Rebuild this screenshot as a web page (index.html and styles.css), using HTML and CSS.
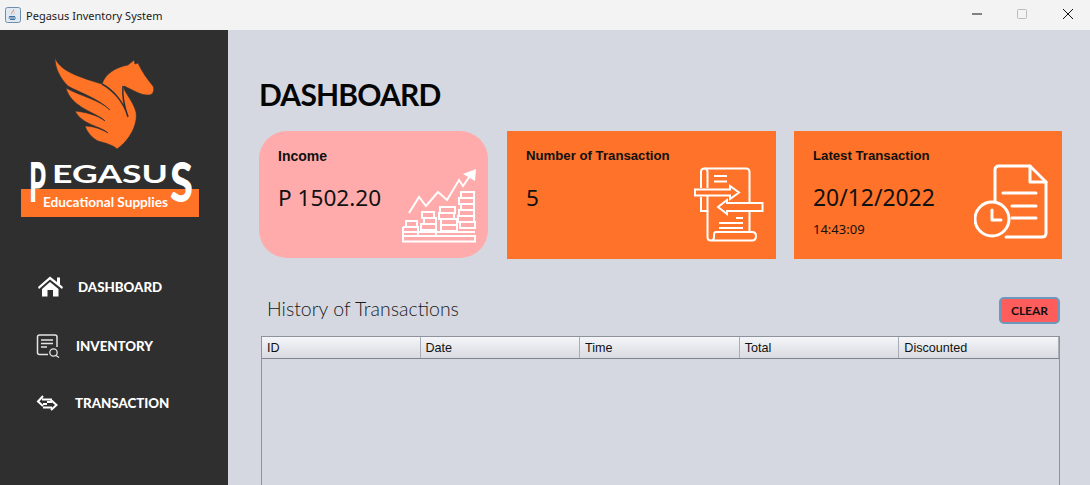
FILE: index.html
```html
<!DOCTYPE html>
<html lang="en">
<head>
	<meta charset="UTF-8">
	<title>Pegasus Inventory System</title>
	<link rel="stylesheet" href="styles.css">
</head>
<body>
	<div class="titlebar">
		<svg class="java-icon" viewBox="0 0 16 16">
			<rect x="0.5" y="0.5" width="15" height="15" rx="2" fill="#dfe9f3" stroke="#6f8dab"/>
			<path d="M9 2 C10 4 6 5 7 8 C5 6 8 4 9 2Z M10 5 C10 6 8 7 9 8.500 C8 7.500 9 6 10 5Z" fill="#e8731f"/>
			<path d="M4 9.500 H10 M3.500 11 H11 M5 12.500 H10" stroke="#3f6f9c" stroke-width="1"/>
		</svg>
		<span class="app-name">Pegasus Inventory System</span>
		<div class="win-btns">
			<svg viewBox="0 0 12 12"><path d="M2 6 H12" stroke="#111" stroke-width="1"/></svg>
			<svg viewBox="0 0 12 12"><rect x="1.500" y="1.500" width="9" height="9" rx="1" fill="none" stroke="#bcbcbc"/></svg>
			<svg viewBox="0 0 12 12"><path d="M1 1 L11 11 M11 1 L1 11" stroke="#111" stroke-width="1"/></svg>
		</div>
	</div>

	<div class="app">
		<div class="sidebar">
			<svg class="logo" viewBox="0 50 228 170">
				<path d="M55 58 C60 70 75 76 102 84 C105 74 116 67 128 65 L134 60 L135 64 L138 63 C142 72 148 80 153 86 C155 90 153 95 149 95 C142 96 133 90 124 86 C122 90 133 100 136 112 C138 124 130 140 117 149 C113 145 105 143 98 141 C92 138 87 132 85 126 C93 126 101 129 108 133 C101 126 82 125 75 111 C85 112 97 115 105 121 C98 113 71 108 66 88 C80 96 100 100 110 110 C98 98 78 92 68 86 C60 78 55 68 55 58Z" fill="#ff7326" stroke="#2b3036" stroke-width="0.600"/>
				<path d="M102 84 C113 90 124 102 128 117 C124 106 122 96 123 86" fill="none" stroke="#2b3036" stroke-width="1.500"/>
				<rect x="21" y="189" width="178" height="28" fill="#ff7326"/>
				<text class="logo-big" x="29" y="202" textLength="17" lengthAdjust="spacingAndGlyphs">P</text>
				<text class="logo-mid" x="52" y="183" textLength="116" lengthAdjust="spacingAndGlyphs">EGASU</text>
				<text class="logo-big" x="170" y="202" textLength="23" lengthAdjust="spacingAndGlyphs">S</text>
				<text class="logo-sub" x="43" y="207" textLength="125" lengthAdjust="spacingAndGlyphs">Educational Supplies</text>
			</svg>

			<div class="nav">
				<a class="nav-item nav-dash">
					<svg class="nav-icon" viewBox="38 275 25 21">
						<path d="M50 275.500 L57 281 V276.500 H60 V283.500 L63 286 L62 288 L50 278.500 L39 288 L38 286Z M42 288 L50 281 L58.500 288 V295.500 H53 V289 H47.500 V295.500 H42Z" fill="#fff"/>
					</svg>
					<span>DASHBOARD</span>
				</a>
				<a class="nav-item nav-inv">
					<svg class="nav-icon" viewBox="36 333 24 25">
						<path d="M48 354.500 H39.500 Q37.500 354.500 37.500 352.500 V337 Q37.500 335 39.500 335 H55 Q57 335 57 337 V347" fill="none" stroke="#e4e4e4" stroke-width="1.500"/>
						<path d="M41 340 H53 M41 343.500 H53 M41 347 H47" stroke="#e4e4e4" stroke-width="1.500"/>
						<circle cx="53.500" cy="352.500" r="3.700" fill="none" stroke="#e4e4e4" stroke-width="1.300"/>
						<path d="M56 355.500 L59 357.500" stroke="#e4e4e4" stroke-width="1.300"/>
					</svg>
					<span>INVENTORY</span>
				</a>
				<a class="nav-item nav-trans">
					<svg class="nav-icon" viewBox="36 393 22 18">
						<path d="M43 395 L38 400.500 L43 405 M42 398.500 H52 M43 403 H47 M47 401 H52 M51 399 L56.500 404 L51 409 M52 406.500 H43" fill="none" stroke="#fff" stroke-width="2"/>
					</svg>
					<span>TRANSACTION</span>
				</a>
			</div>
		</div>

		<div class="main">
			<h1>DASHBOARD</h1>

			<div class="cards">
				<div class="card card-income">
					<div class="card-text">
						<div class="card-label">Income</div>
						<div class="card-value">P 1502.20</div>
					</div>
					<svg class="card-icon" viewBox="402 170 74 74">
						<g fill="none" stroke="#fff" stroke-width="2">
							<path d="M409 214 L419 198 L426 207 L438 193 L447 201 L459 181 L463 187 L472 174"/>
							<rect x="403" y="237" width="72" height="5.500"/>
							<path d="M475 233 H403 M403 228 H418 V237 M403 228 V237 M406 222 H417 V228 H406Z"/>
							<path d="M422 213 H434 V219 H422Z M424 219 H436 V225 H424Z M421 225 H436 V231 H421Z M421 231 H436 V237 H421"/>
							<path d="M440 208 H455 V214 H440Z M439 214 H454 V220 H439Z M441 220 H457 V226 H441Z M441 226 H457 V232 H441Z"/>
							<path d="M461 193 H474 V199 H461Z M459 199 H474 V205 H459Z M461 205 H474 V211 H461Z M459 211 H474 V217 H459Z M458 217 H474 V223 H458Z M460 223 H475 V229 H460Z"/>
						</g>
						<path d="M463 175 L476 170 L475 182Z" fill="#fff"/>
					</svg>
				</div>

				<div class="card card-num">
					<div class="card-text">
						<div class="card-label">Number of Transaction</div>
						<div class="card-value">5</div>
					</div>
					<svg class="card-icon" viewBox="694 168 70 75">
						<g fill="none" stroke="#fff" stroke-width="2">
							<path d="M701 189 V173 Q701 169.500 704.500 169.500 H746 Q749.500 169.500 749.500 173 V203"/>
							<path d="M701 198 V212 H707.500 V197 M707.500 189 V173 Q707.500 169.500 704.500 169.500"/>
							<path d="M695 190.500 H730 V187 L739 193.500 L730 200 V196.500 H695Z"/>
							<path d="M762.500 204 H727 V201 L718 208 L727 215 V212 H762.500Z"/>
							<path d="M749.500 212 V233 M707.500 212 V238 Q707.500 241.500 711 241.500 H752 Q756 241.500 756 237 Q756 233 752 233 H716 Q714 233 714 236 V238 Q714 241.500 711 241.500"/>
							<path d="M714 177 H727 M714 182.500 H727 M736 219 H743 M719 224 H743 M719 229 H743"/>
						</g>
					</svg>
				</div>

				<div class="card card-latest">
					<div class="card-text">
						<div class="card-label">Latest Transaction</div>
						<div class="card-value">20/12/2022</div>
						<div class="card-time">14:43:09</div>
					</div>
					<svg class="card-icon" viewBox="974 165 74 75">
						<g fill="none" stroke="#fff" stroke-width="3" stroke-linecap="round" stroke-linejoin="round">
							<path d="M995 203 V171 Q995 167 999 167 H1030 L1046 183 V234 Q1046 238 1042 238 H1006"/>
							<path d="M1030 167 V183 H1046"/>
							<path d="M1003 194 H1036 M1012 207 H1036 M1012 219 H1036"/>
							<circle cx="992" cy="220" r="17"/>
							<path d="M992 211 V221 H1001"/>
						</g>
					</svg>
				</div>
			</div>

			<div class="history">
				<h2>History of Transactions</h2>
				<button class="clear-btn">CLEAR</button>
			</div>

			<div class="table-box">
				<table>
					<thead>
						<tr>
							<th class="col-id">ID</th>
							<th class="col-mid">Date</th>
							<th class="col-mid">Time</th>
							<th class="col-mid">Total</th>
							<th>Discounted</th>
						</tr>
					</thead>
				</table>
			</div>
		</div>
	</div>
</body>
</html>
```

FILE: styles.css
```css
html, body{
	margin: 0;
	padding: 0;
	height: 485px;
	overflow: hidden;
}
body{
	font-family: "Liberation Sans",arial,sans-serif;
	background: #d5d8e1;
}
.titlebar{
	display: flex;
	align-items: center;
	height: 30px;
	padding-left: 5px;
	background: #f3f3f3;
}
.java-icon{
	width: 16px;
	height: 16px;
	margin-right: 5px;
}
.app-name{
	font-family: "Noto Sans",sans-serif;
	font-size: 11px;
	letter-spacing: 0.02px;
	color: #1a1a1a;
}
.win-btns{
	display: flex;
	gap: 34px;
	margin-left: auto;
	margin-right: 16px;
	padding-bottom: 2px;
}
.win-btns svg{
	display: block;
	width: 12px;
	height: 12px;
}
.app{
	display: flex;
	height: 455px;
}
.sidebar{
	flex: none;
	width: 228px;
	background: #2f2f2f;
}
.logo{
	display: block;
	width: 228px;
	height: 170px;
	margin-top: 20px;
}
.logo text{
	font-family: Lato,sans-serif;
	font-weight: 700;
	fill: #fff;
}
.logo .logo-big{
	font-size: 55px;
	font-weight: 900;
}
.logo-mid{
	font-size: 25px;
}
.logo-sub{
	font-size: 13px;
}
.nav{
	display: flex;
	flex-direction: column;
	margin-top: 56px;
}
.nav-item{
	display: flex;
	align-items: center;
	color: #fff;
	font-family: Lato,sans-serif;
	font-weight: 900;
	font-size: 13.3px;
}
.nav-icon{
	display: block;
	flex: none;
}
.nav-dash{
	height: 21px;
	padding-left: 38px;
}
.nav-dash .nav-icon{
	width: 25px;
	height: 21px;
	margin-right: 15px;
}
.nav-inv{
	height: 25px;
	margin-top: 36px;
	padding-left: 36px;
}
.nav-inv .nav-icon{
	width: 24px;
	height: 25px;
	margin-right: 16px;
}
.nav-trans{
	height: 18px;
	margin-top: 36px;
	padding-left: 36px;
}
.nav-trans .nav-icon{
	width: 22px;
	height: 18px;
	margin-right: 17px;
}
.main{
	flex: 1;
	padding-left: 31px;
}
h1{
	margin: 45px 0 0;
	font-family: Lato,sans-serif;
	font-weight: 700;
	font-size: 30px;
	letter-spacing: -0.800px;
	line-height: 38px;
	color: #050505;
}
.cards{
	display: flex;
	gap: 18px;
	margin-top: 18px;
}
.card{
	display: flex;
	justify-content: space-between;
	align-items: flex-end;
	box-sizing: border-box;
	height: 128px;
	background: #ff7229;
}
.card-income{
	width: 229px;
	height: 127px;
	margin-right: 1px;
	padding: 0 12px 15px 19px;
	border-radius: 28px;
	background: #ffabab;
}
.card-num{
	width: 269px;
	padding: 0 12px 17px 19px;
}
.card-latest{
	width: 268px;
	padding: 0 14px 20px 19px;
}
.card-text{
	align-self: flex-start;
}
.card-label{
	margin-top: 17px;
	font-size: 13.200px;
	font-weight: 700;
	line-height: 16px;
	color: #111;
}
.card-income .card-label{
	font-size: 14px;
}
.card-value{
	margin-top: 18px;
	font-family: "Noto Sans",sans-serif;
	font-size: 22.6px;
	line-height: 32px;
	color: #111;
}
.card-latest .card-value{
	font-size: 22.900px;
}
.card-time{
	margin-top: 6px;
	font-family: "Noto Sans",sans-serif;
	font-size: 13px;
	line-height: 18px;
	color: #111;
}
.card-income .card-icon{
	width: 74px;
	height: 74px;
}
.card-num .card-icon{
	width: 70px;
	height: 75px;
}
.card-latest .card-icon{
	width: 74px;
	height: 75px;
}
.history{
	display: flex;
	justify-content: space-between;
	align-items: flex-start;
	width: 801px;
	height: 27px;
	margin-top: 38px;
}
h2{
	margin: 0 0 0 8px;
	font-family: Lato,sans-serif;
	font-weight: 300;
	font-size: 19.500px;
	line-height: 24px;
	color: #1a1a1a;
}
.clear-btn{
	box-sizing: border-box;
	width: 61px;
	height: 27px;
	padding: 0;
	border: 2px solid #6d98bd;
	border-radius: 5px;
	background: #ff5c5c;
	font-family: Lato,sans-serif;
	font-weight: 700;
	font-size: 12px;
	color: #111;
}
.table-box{
	box-sizing: border-box;
	width: 799px;
	height: 160px;
	margin: 12px 0 0 2px;
	border: 1px solid #8e929a;
	border-bottom: 0;
}
table{
	width: 797px;
	border-collapse: collapse;
	table-layout: fixed;
}
th{
	box-sizing: border-box;
	height: 21px;
	padding: 2px 0 0 5px;
	border-right: 1px solid #a9adb5;
	border-bottom: 1px solid #80848c;
	background: linear-gradient(#f4f5f8,#d9dbe2);
	font-size: 12.600px;
	font-weight: 400;
	text-align: left;
	color: #111;
}
.col-id{
	width: 158px;
}
.col-mid{
	width: 159.600px;
}
```
